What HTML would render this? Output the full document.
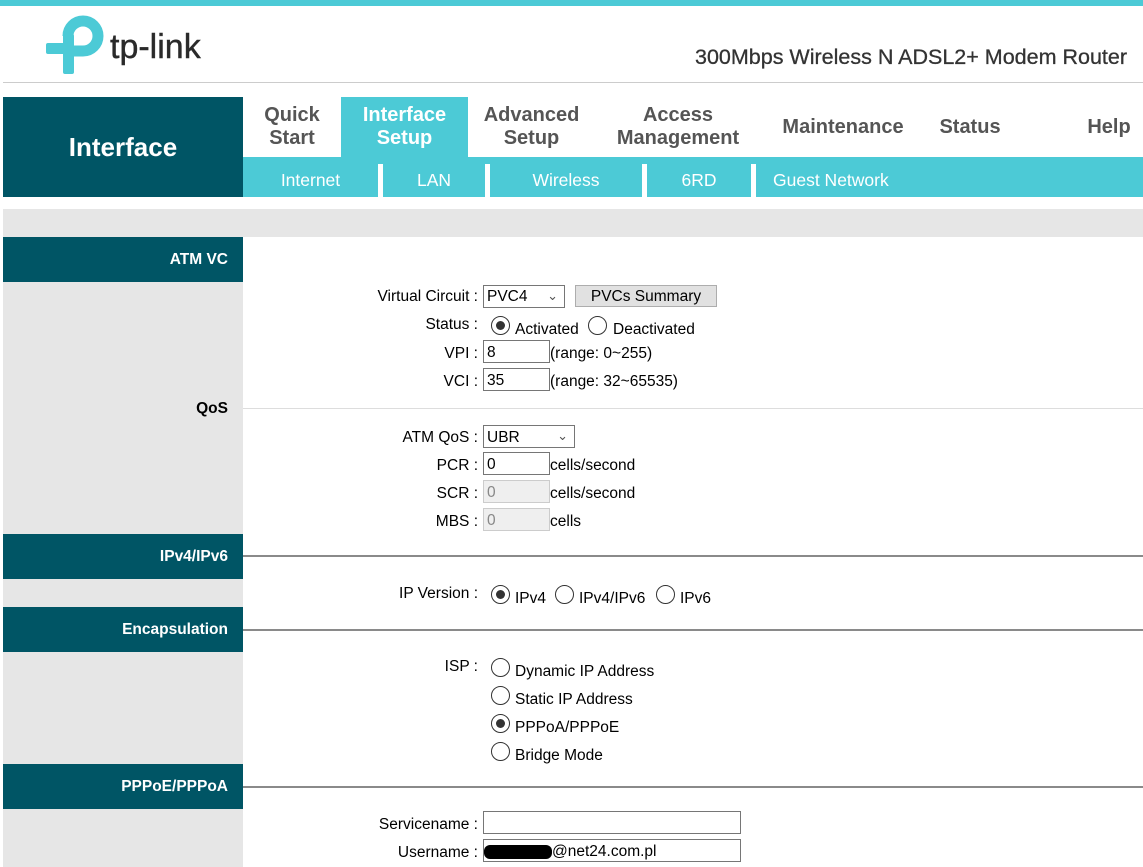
<!DOCTYPE html>
<html><head><meta charset="utf-8"><style>
*{margin:0;padding:0;box-sizing:border-box}
body{width:1143px;height:867px;position:relative;overflow:hidden;background:#fff;font-family:"Liberation Sans",Arial,sans-serif;color:#000}
.a{position:absolute}
.t{font-size:15.5px;white-space:nowrap}
.lbl{position:absolute;right:665px;font-size:15.5px;white-space:nowrap}
.nav{position:absolute;top:97px;height:60px;font-weight:bold;font-size:20px;color:#555;text-align:center;line-height:23px;display:flex;align-items:center;justify-content:center}
.sub{position:absolute;top:164px;height:33px;color:#fff;font-size:17.5px;line-height:33px;text-align:center}
.sep{position:absolute;top:164px;height:33px;width:5px;background:#fff}
.hd{position:absolute;left:3px;width:240px;background:#005565;color:#fff;font-weight:bold;font-size:15.5px;text-align:right;padding-right:15px}
.inp{position:absolute;height:23px;border:1px solid #767676;background:#fff;font-size:15.5px;padding-left:3px;line-height:21px}
.dis{background:#efefef;border-color:#ccc;color:#888}
.r{position:absolute;width:19px;height:19px;border:1px solid #333;border-radius:50%;background:#fff}
.r.on::after{content:"";position:absolute;left:4px;top:4px;width:9px;height:9px;border-radius:50%;background:#333}
.hl{position:absolute;left:243px;right:0;height:2px;background:#8a8a8a}
.dn{margin-top:2px}
</style></head><body>
<div class="a" style="left:0;top:0;width:1143px;height:6px;background:#4ccad6"></div>
<svg class="a" style="left:0;top:0" width="220" height="80" viewBox="0 0 220 80">
<path d="M68 36 A15 15 0 1 1 83 51 L69 51" fill="none" stroke="#4ccad6" stroke-width="11"/>
<rect x="63" y="34" width="11" height="40" rx="2" fill="#4ccad6"/>
<rect x="46" y="43" width="26" height="11" rx="2" fill="#4ccad6"/>
<text x="110" y="58" font-family="Liberation Sans,sans-serif" font-size="34" fill="#2a2a2a" stroke="#2a2a2a" stroke-width="0.4">tp-link</text>
</svg>
<div class="a" style="right:16px;top:45px;font-size:21.5px;color:#333;-webkit-text-stroke:0.3px #333">300Mbps Wireless N ADSL2+ Modem Router</div>
<div class="a" style="left:3px;right:0;top:82px;height:1px;background:#ccc"></div>
<div class="a" style="left:3px;top:97px;width:240px;height:100px;background:#005565;color:#fff;font-weight:bold;font-size:26px;line-height:100px;text-align:center">Interface</div>
<div class="a" style="left:243px;top:157px;width:900px;height:40px;background:#4ccad6"></div>
<div class="nav" style="left:243px;width:98px">Quick<br>Start</div>
<div class="nav" style="left:341px;width:127px;background:#4ccad6;color:#fff">Interface<br>Setup</div>
<div class="nav" style="left:468px;width:127px">Advanced<br>Setup</div>
<div class="nav" style="left:605px;width:146px">Access<br>Management</div>
<div class="nav" style="left:770px;width:146px">Maintenance</div>
<div class="nav" style="left:925px;width:90px">Status</div>
<div class="nav" style="left:1075px;width:68px">Help</div>
<div class="sub" style="left:243px;width:135px">Internet</div>
<div class="sep" style="left:378px"></div>
<div class="sub" style="left:383px;width:102px">LAN</div>
<div class="sep" style="left:485px"></div>
<div class="sub" style="left:490px;width:152px">Wireless</div>
<div class="sep" style="left:642px"></div>
<div class="sub" style="left:647px;width:104px">6RD</div>
<div class="sep" style="left:751px"></div>
<div class="sub" style="left:773px;text-align:left">Guest Network</div>
<div class="a" style="left:3px;right:0;top:209px;height:28px;background:#e6e6e6"></div>
<div class="a" style="left:3px;top:237px;width:240px;height:630px;background:#e6e6e6"></div>
<div class="hd" style="top:237px;height:45px;line-height:45px">ATM VC</div>
<div class="hd" style="top:534px;height:45px;line-height:45px">IPv4/IPv6</div>
<div class="hd" style="top:607px;height:45px;line-height:45px">Encapsulation</div>
<div class="hd" style="top:764px;height:45px;line-height:45px">PPPoE/PPPoA</div>
<div class="a" style="left:3px;width:225px;top:400px;text-align:right;font-weight:bold;font-size:15.5px">QoS</div>
<div class="a" style="left:243px;right:0;top:408px;height:1px;background:#ddd"></div>
<div class="hl" style="top:555px"></div>
<div class="hl" style="top:629px"></div>
<div class="hl" style="top:786px"></div>

<div class="lbl" style="top:288px">Virtual Circuit :</div>
<div class="inp" style="left:483px;top:285px;width:82px">PVC4<span style="position:absolute;right:6px;top:-1px;font-size:13px;color:#555">&#8964;</span></div>
<div class="a" style="left:575px;top:285px;width:142px;height:22px;background:#e1e1e1;border:1px solid #adadad;font-size:15.5px;text-align:center;line-height:21px">PVCs Summary</div>
<div class="lbl" style="top:316px">Status :</div>
<div class="r on" style="left:491px;top:316px"></div><div class="a t" style="left:515px;top:321px">Activated</div>
<div class="r" style="left:588px;top:316px"></div><div class="a t" style="left:613px;top:321px">Deactivated</div>
<div class="lbl" style="top:345px">VPI :</div>
<div class="inp" style="left:483px;top:340px;width:67px;padding-top:1px">8</div><div class="a t" style="left:550px;top:345px">(range: 0~255)</div>
<div class="lbl" style="top:373px">VCI :</div>
<div class="inp" style="left:483px;top:368px;width:67px;padding-top:1px">35</div><div class="a t" style="left:550px;top:373px">(range: 32~65535)</div>

<div class="lbl" style="top:429px">ATM QoS :</div>
<div class="inp" style="left:483px;top:425px;width:92px;padding-top:1px">UBR<span style="position:absolute;right:6px;top:-1px;font-size:13px;color:#555">&#8964;</span></div>
<div class="lbl" style="top:457px">PCR :</div>
<div class="inp" style="left:483px;top:452px;width:67px;padding-top:1px">0</div><div class="a t" style="left:550px;top:457px">cells/second</div>
<div class="lbl" style="top:485px">SCR :</div>
<div class="inp dis" style="left:483px;top:480px;width:67px;padding-top:1px">0</div><div class="a t" style="left:550px;top:485px">cells/second</div>
<div class="lbl" style="top:513px">MBS :</div>
<div class="inp dis" style="left:483px;top:508px;width:67px;padding-top:1px">0</div><div class="a t" style="left:550px;top:513px">cells</div>

<div class="lbl" style="top:585px">IP Version :</div>
<div class="r on" style="left:491px;top:585px"></div><div class="a t" style="left:515px;top:590px">IPv4</div>
<div class="r" style="left:555px;top:585px"></div><div class="a t" style="left:579px;top:590px">IPv4/IPv6</div>
<div class="r" style="left:656px;top:585px"></div><div class="a t" style="left:680px;top:590px">IPv6</div>

<div class="lbl" style="top:658px">ISP :</div>
<div class="r" style="left:491px;top:658px"></div><div class="a t" style="left:515px;top:663px">Dynamic IP Address</div>
<div class="r" style="left:491px;top:686px"></div><div class="a t" style="left:515px;top:691px">Static IP Address</div>
<div class="r on" style="left:491px;top:714px"></div><div class="a t" style="left:515px;top:719px">PPPoA/PPPoE</div>
<div class="r" style="left:491px;top:742px"></div><div class="a t" style="left:515px;top:747px">Bridge Mode</div>

<div class="lbl" style="top:816px">Servicename :</div>
<div class="inp" style="left:483px;top:811px;width:258px"></div>
<div class="lbl" style="top:844px">Username :</div>
<div class="inp" style="left:483px;top:839px;width:258px;padding-left:0;padding-top:1px"><span style="display:inline-block;width:68px;height:14px;background:#000;border-radius:6px;vertical-align:middle"></span>@net24.com.pl</div>
</body></html>
